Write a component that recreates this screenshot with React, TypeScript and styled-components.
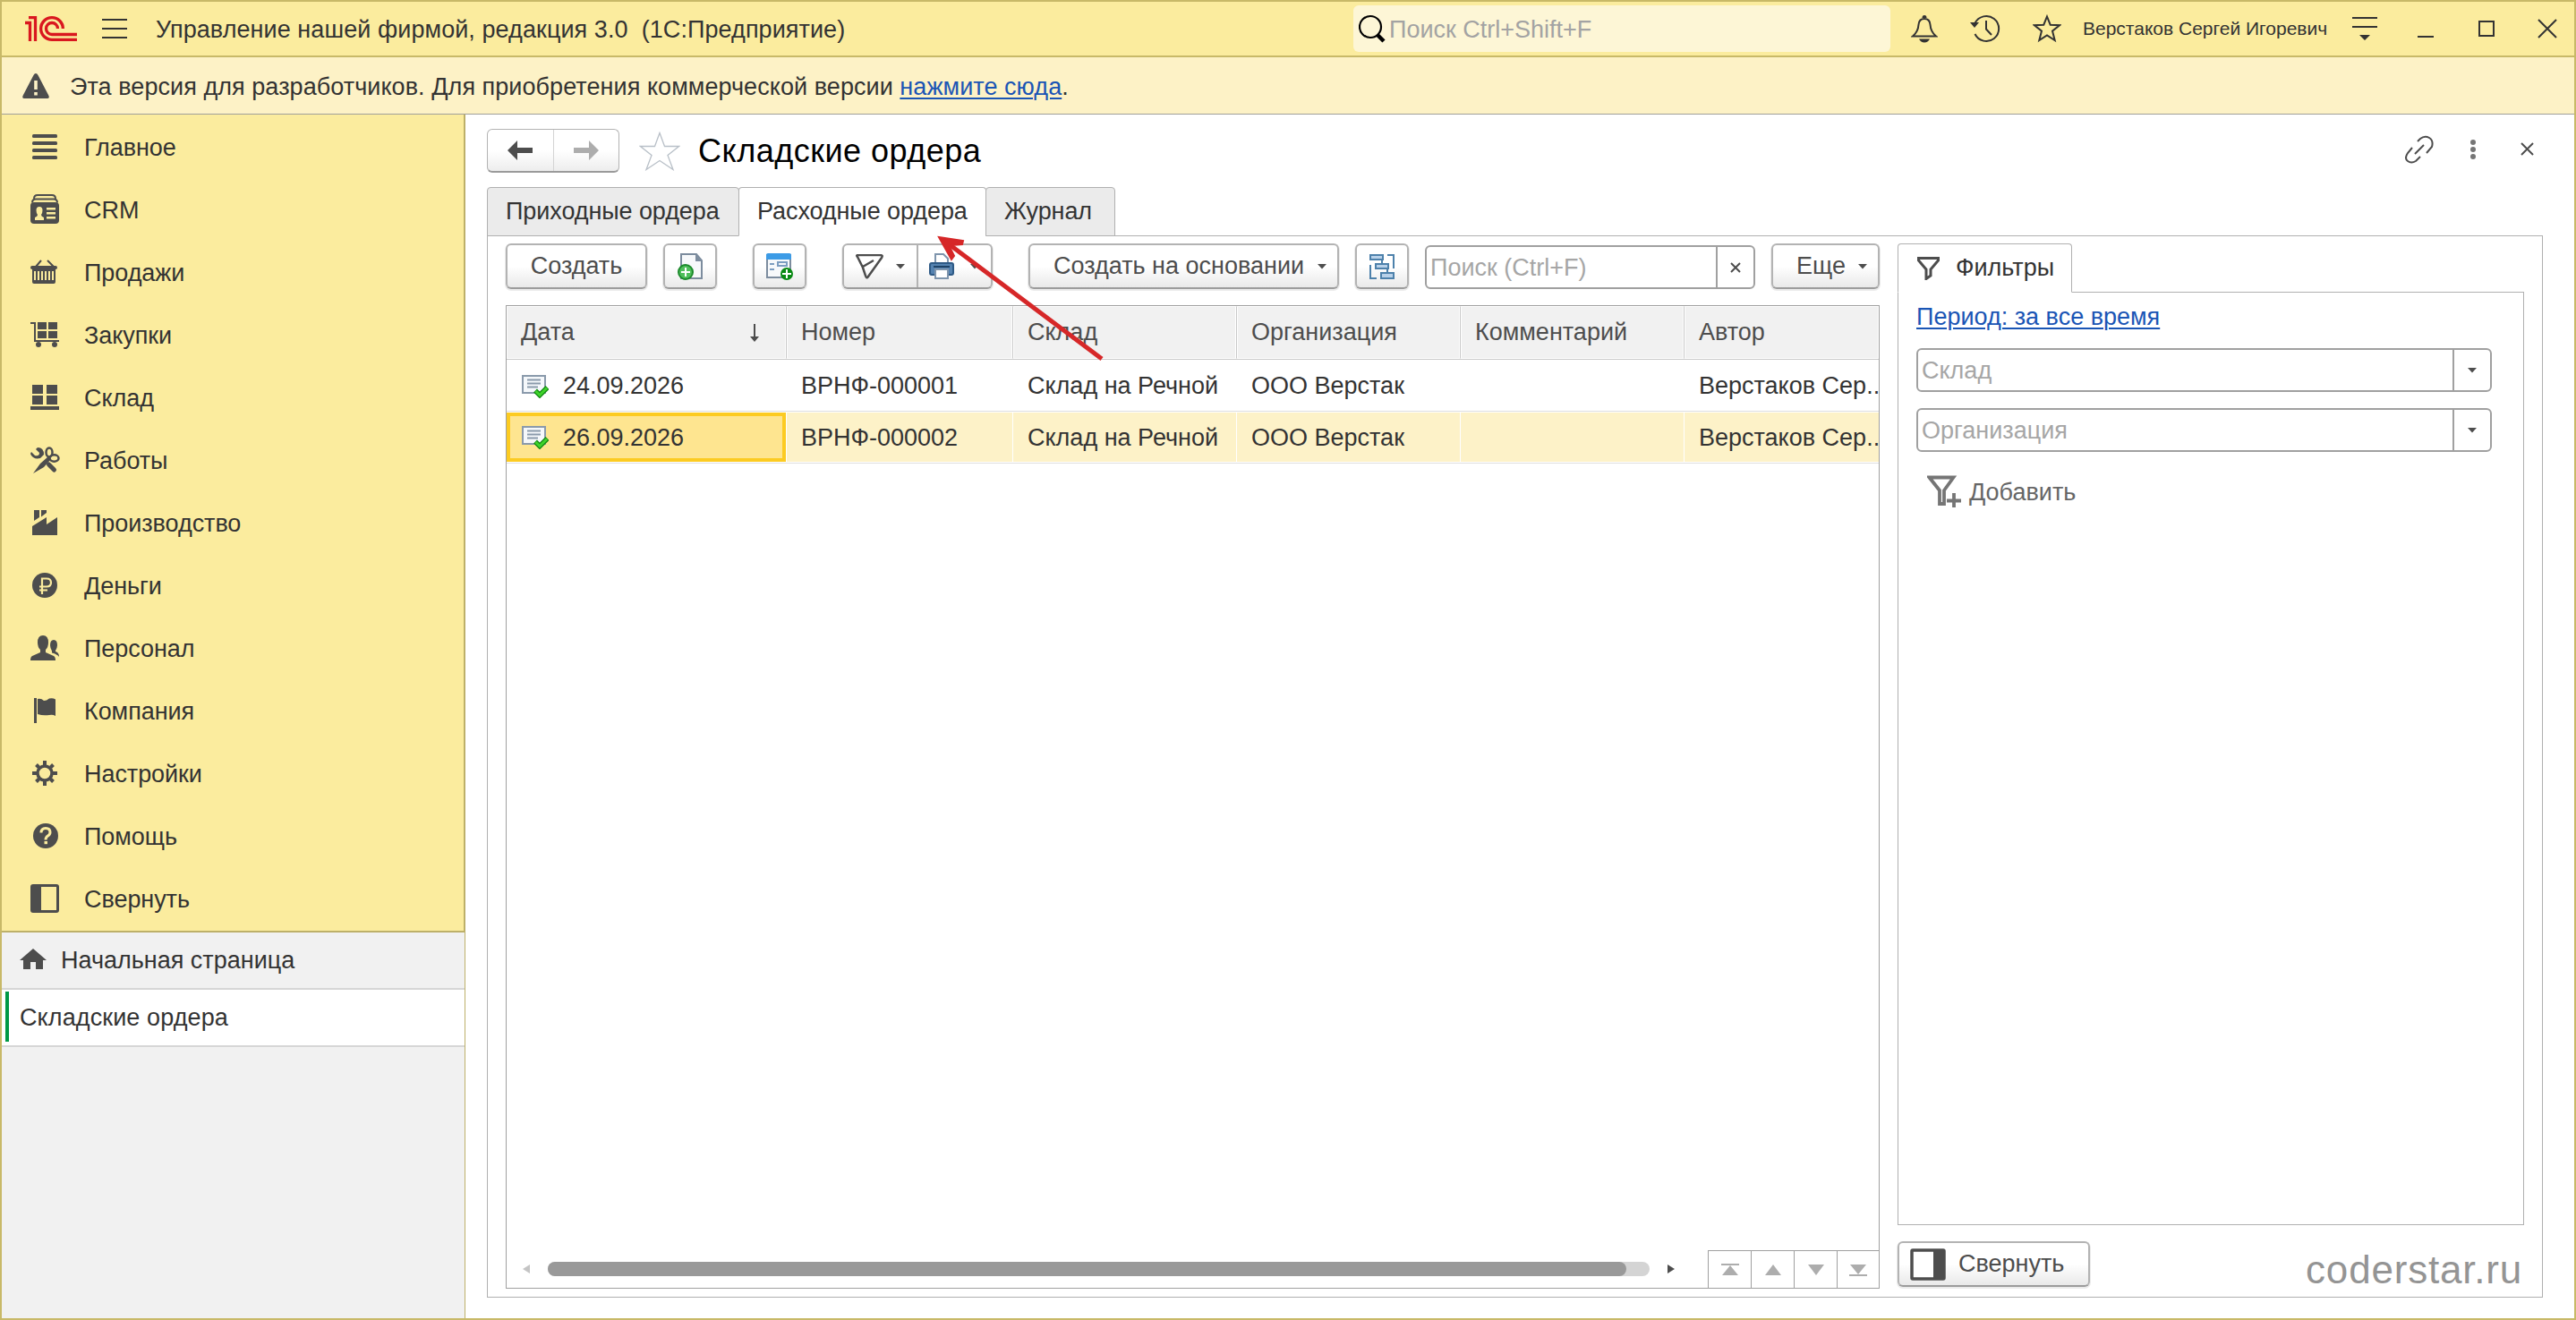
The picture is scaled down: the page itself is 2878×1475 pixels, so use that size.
import React from 'react'
import styled, { createGlobalStyle, css } from 'styled-components'

const GlobalStyle = createGlobalStyle`
  * {
    box-sizing: border-box;
  }

  body {
    margin: 0;
    font-family: 'Liberation Sans', Arial, sans-serif;
    font-size: 27px;
    color: #333333;
    background-color: #ffffff;
  }

  svg {
    display: block;
    flex-shrink: 0;
  }
`

const Window = styled.div`
  position: relative;
  display: flex;
  flex-direction: column;
  width: 2878px;
  height: 1475px;
  border: 2px solid #c8b968;
  overflow: hidden;
  white-space: nowrap;
`

const TitleBar = styled.div`
  display: flex;
  align-items: center;
  height: 62px;
  padding-left: 26px;
  background-color: #fbec9e;
  border-bottom: 2px solid #c8b968;
`

const AppTitle = styled.div`
  width: 1370px;
  padding: 2px 0 0 32px;
  letter-spacing: 0.07px;
  white-space: pre;
`

const GlobalSearch = styled.div`
  display: flex;
  align-items: center;
  gap: 4px;
  width: 600px;
  height: 52px;
  padding-left: 6px;
  border-radius: 6px;
  background-color: #fdf6d6;
  color: #a3a3a3;

  span {
    padding-top: 2px;
  }
`

const TitleActions = styled.div`
  display: flex;
  align-items: center;
  gap: 36px;
  margin-left: 23px;
`

const UserName = styled.div`
  width: 301px;
  margin-left: 24px;
  font-size: 21px;
`

const WindowActions = styled.div`
  display: flex;
  align-items: center;
  gap: 40px;
`

const Notice = styled.div`
  display: flex;
  align-items: center;
  height: 64px;
  padding-left: 22px;
  gap: 22px;
  background-color: #fdf2c6;
  border-bottom: 1px solid #a09f9a;
  letter-spacing: 0.06px;

  span {
    padding-top: 3px;
  }
`

const Link = styled.a`
  color: #1a55b5;
  text-decoration: underline;
  text-decoration-thickness: 2px;
  text-underline-offset: 3px;
`

const Body = styled.div`
  display: flex;
  flex: 1;
  min-height: 0;
`

const Sidebar = styled.div`
  display: flex;
  flex-direction: column;
  width: 518px;
  background-color: #f1f1f1;
  border-right: 1px solid #bdb069;
`

const Menu = styled.div`
  height: 914px;
  padding-top: 1px;
  background-color: #fbec9e;
  border-bottom: 2px solid #bdb069;
  border-right: 1px solid #bdb069;
`

const MenuItem = styled.div`
  display: flex;
  align-items: center;
  height: 70px;
  padding-left: 30px;
  gap: 26px;
  letter-spacing: -0.06px;

  span {
    padding-top: 2px;
  }
`

const OpenPage = styled.div<{ $active?: boolean }>`
  display: flex;
  align-items: center;
  height: 64px;
  padding-left: 18px;
  gap: 16px;
  border-bottom: 2px solid #d6d6d6;

  ${p =>
    p.$active &&
    css`
      padding-left: 4px;
      gap: 12px;
      background-color: #ffffff;
      letter-spacing: 0.1px;
    `}
`

const ActiveMark = styled.div`
  width: 4px;
  height: 56px;
  margin-top: -2px;
  background-color: #009846;
`

const Page = styled.div`
  display: flex;
  flex-direction: column;
  flex: 1;
  min-width: 0;
  padding: 16px 35px 23px 24px;
`

const PageHeader = styled.div`
  display: flex;
  align-items: center;
  height: 49px;
  margin-bottom: 16px;
`

const History = styled.div`
  display: flex;
  width: 148px;
  height: 49px;
  border: 1px solid #b3b3b3;
  border-bottom: 2px solid #9a9a9a;
  border-radius: 6px;
  background: linear-gradient(#ffffff 50%, #ededed);
`

const HistoryButton = styled.div`
  display: flex;
  align-items: center;
  justify-content: center;
  flex: 1;

  & + & {
    border-left: 1px solid #d4d4d4;
  }
`

const PageTitle = styled.h1`
  flex: 1;
  margin: 0;
  padding: 1px 0 0 20px;
  font-size: 36px;
  font-weight: normal;
  letter-spacing: 0.5px;
  color: #000000;
`

const PageActions = styled.div`
  display: flex;
  align-items: center;
  padding: 0 10px 4px 0;
`

const Tabs = styled.div`
  display: flex;
  height: 55px;
  margin-bottom: -1px;
`

const Tab = styled.div<{ $width: number; $active?: boolean }>`
  position: relative;
  display: flex;
  align-items: center;
  width: ${p => p.$width}px;
  padding: 0 0 0 20px;
  border: 1px solid #b0b0b0;
  border-radius: 4px 4px 0 0;
  background-color: ${p => (p.$active ? '#ffffff' : '#ebebeb')};
  border-bottom-color: ${p => (p.$active ? '#ffffff' : '#b0b0b0')};
  letter-spacing: -0.08px;

  & + & {
    margin-left: -1px;
  }
`

const Pane = styled.div`
  display: flex;
  flex: 1;
  min-height: 0;
  gap: 20px;
  padding: 8px 20px 9px 20px;
  border: 1px solid #b0b0b0;
`

const ListColumn = styled.div`
  display: flex;
  flex-direction: column;
  width: 1535px;
`

const Toolbar = styled.div`
  display: flex;
  align-items: flex-start;
  gap: 18px;
  height: 52px;
  margin-bottom: 17px;
`

const raised = css`
  height: 51px;
  border: 2px solid #b3b3b3;
  border-bottom-color: #9c9c9c;
  border-radius: 6px;
  background: linear-gradient(#ffffff 50%, #e9e9e9);
  box-shadow: 0 1px 0 1px rgba(0, 0, 0, 0.08);
  color: #4d4d4d;
`

const Button = styled.div<{ $width: number; $space?: number }>`
  ${raised}
  display: flex;
  align-items: center;
  justify-content: center;
  flex-shrink: 0;
  width: ${p => p.$width}px;
  margin-left: ${p => p.$space || 0}px;
`

const MenuButton = styled(Button)`
  justify-content: space-between;
  padding: 0 12px 0 26px;
`

const ButtonGroup = styled.div`
  ${raised}
  display: flex;
  width: 168px;
  margin: 0 22px;
`

const GroupButton = styled.div`
  display: flex;
  align-items: center;
  justify-content: space-between;
  flex: 1;
  padding: 0 13px 0 12px;

  & + & {
    border-left: 2px solid #b3b3b3;
  }
`

const Field = styled.div<{ $width: number }>`
  display: flex;
  width: ${p => p.$width}px;
  height: 49px;
  flex-shrink: 0;
  border: 2px solid #a0a0a0;
  border-radius: 6px;
  color: #a6a6a6;
`

const ToolbarSearch = styled(Field)`
  margin-top: 2px;
`

const FieldText = styled.div`
  flex: 1;
  padding: 8px 0 0 4px;
`

const FieldButton = styled.div`
  display: flex;
  align-items: center;
  justify-content: center;
  width: 42px;
  border-left: 2px solid #a0a0a0;
`

const Table = styled.div`
  display: flex;
  flex-direction: column;
  flex: 1;
  border: 1px solid #a0a0a0;
  overflow: hidden;
`

const Row = styled.div<{ $selected?: boolean }>`
  display: grid;
  grid-template-columns: 312px 253px 250px 250px 250px 218px;
  height: 58px;
  padding-top: 1px;
  border-bottom: 1px solid #dedede;

  ${p =>
    p.$selected &&
    css`
      div {
        background-color: #fdf2c8;
      }

      div + div {
        border-left-color: #ffffff;
      }
    `}
`

const HeaderRow = styled(Row)`
  height: 60px;
  padding: 0;
  color: #4d4d4d;
  border-bottom-color: #c8c8c8;
`

const HeaderCell = styled.div`
  display: flex;
  align-items: center;
  justify-content: space-between;
  padding: 0 28px 0 15px;
  background-color: #f1f1f1;
  border: 1px solid #ffffff;

  & + & {
    border-left: 1px solid #c8c8c8;
    padding-left: 16px;
    box-shadow: inset 1px 0 0 #ffffff;
  }
`

const Cell = styled.div<{ $current?: boolean }>`
  display: flex;
  align-items: center;
  gap: 16px;
  height: 55px;
  padding: 2px 0 0 16px;
  border-left: 1px solid transparent;
  overflow: hidden;

  ${p =>
    p.$current &&
    css`
      && {
        padding: 1px 0 0 13px;
        background-color: #fee590;
        border: 4px solid #fccb22;
      }
    `}
`

const TableFooter = styled.div`
  display: flex;
  align-items: flex-end;
  margin-top: auto;
  height: 42px;
`

const ScrollArea = styled.div`
  display: flex;
  align-items: center;
  flex: 1;
  height: 42px;
  padding: 0 37px 0 18px;
`

const ScrollTrack = styled.div`
  flex: 1;
  height: 16px;
  margin: 0 20px;
  border-radius: 8px;
  background-color: #d4d4d4;
`

const ScrollThumb = styled.div`
  width: 1205px;
  height: 16px;
  border-radius: 8px;
  background-color: #999999;
`

const NavButton = styled.div`
  display: flex;
  align-items: center;
  justify-content: center;
  width: 48px;
  height: 42px;
  border: 1px solid #a0a0a0;
  border-width: 1px 0 0 1px;

  &:last-child {
    width: 47px;
  }
`

const FilterColumn = styled.div`
  display: flex;
  flex-direction: column;
  flex: 1;
`

const FilterTab = styled.div`
  position: relative;
  display: flex;
  align-items: center;
  width: 195px;
  height: 55px;
  margin-bottom: -1px;
  padding: 0 0 0 21px;
  gap: 18px;
  border: 1px solid #b0b0b0;
  border-bottom-color: #ffffff;
  border-radius: 4px 4px 0 0;
  background-color: #ffffff;
`

const FilterPanel = styled.div`
  display: flex;
  flex-direction: column;
  align-items: flex-start;
  flex: 1;
  gap: 18px;
  padding: 12px 0 0 20px;
  margin-bottom: 18px;
  border: 1px solid #b0b0b0;
`

const PeriodLink = styled(Link)`
  height: 32px;
`

const AddFilter = styled.div`
  display: flex;
  align-items: center;
  padding-left: 12px;
  margin-top: 8px;
  gap: 9px;
  color: #666666;
`

const CollapseButton = styled(Button)`
  justify-content: flex-start;
  margin-bottom: 2px;
  padding-left: 12px;
  gap: 14px;
`

const Watermark = styled.div`
  position: absolute;
  right: 58px;
  bottom: 29px;
  font-size: 44px;
  line-height: 50px;
  letter-spacing: 0.8px;
  color: #949494;
`

const Pointer = styled.svg`
  position: absolute;
  left: 1039px;
  top: 252px;
`

const dark = '#4d4d4d'
const ink = '#333333'

const Caret = () => (
  <svg width="10" height="6" viewBox="0 0 10 6">
    <path d="M0 0h10l-5 5.5z" fill={dark} />
  </svg>
)

const Cross = ({ size }: { size: number }) => (
  <svg width={size} height={size} viewBox={`0 0 ${size} ${size}`}>
    <path d={`M1 1L${size - 1} ${size - 1}M${size - 1} 1L1 ${size - 1}`} stroke={dark} strokeWidth={2} />
  </svg>
)

const Logo = () => (
  <svg width="58" height="28" viewBox="0 0 58 28" fill="none" stroke="#d9171f" strokeWidth="3.300">
    <path d="M0 7.500H5.500V28M4 1.650h7.500V28" />
    <path d="M42.350 14A12.350 12.350 0 1 0 30 26.350H58" />
    <path d="M36.500 14A6.500 6.500 0 1 0 30 20.500H58" />
  </svg>
)

const menuItems = [
  {
    title: 'Главное',
    icon: (
      <>
        <rect x="4" y="4" width="28" height="4" rx="1.500" />
        <rect x="4" y="12" width="28" height="4" rx="1.500" />
        <rect x="4" y="20" width="28" height="4" rx="1.500" />
        <rect x="4" y="28" width="28" height="4" rx="1.500" />
      </>
    )
  },
  {
    title: 'CRM',
    icon: (
      <>
        <path d="M6 6q0-4 4-4h16q4 0 4 4M4 10.500q0-4 4-4h20q4 0 4 4" fill="none" stroke={dark} strokeWidth="2" />
        <rect x="2" y="10" width="32" height="24" rx="4" />
        <path
          d="M7 30v-3q3-1 3-3-1.500-2-1.500-5 0-4 3.500-4t3.500 4q0 3-1.500 5 0 2 3 3v3zM20 16h10v2.500H20zM20 21h10v2.500H20zM20 26h10v2.500H20z"
          fill="#fbec9e"
        />
      </>
    )
  },
  {
    title: 'Продажи',
    icon: (
      <>
        <path d="M8 12l6-7M28 12l-7-7" stroke={dark} strokeWidth="2" />
        <rect x="2" y="11" width="30" height="4" rx="2" />
        <path d="M4 14h26v15q0 2-2 2H6q-2 0-2-2z" />
        <path d="M6 17h2v10H6zM10 17h2v10h-2zM14 17h2v10h-2zM18 17h2v10h-2zM22 17h2v10h-2zM26 17h2v10h-2z" fill="#fbec9e" />
      </>
    )
  },
  {
    title: 'Закупки',
    icon: (
      <>
        <path d="M2 4h6v20h26v2H6V6H2zM10 4h10v8H10zM22 4h10v8H22zM10 14h10v8H10zM22 14h10v8H22z" />
        <circle cx="11" cy="29" r="3" />
        <circle cx="29" cy="29" r="3" />
      </>
    )
  },
  { title: 'Склад', icon: <path d="M4 4h12v10H4zM20 4h12v10H20zM4 16h12v10H4zM20 16h12v10H20zM2 28h32v4H2z" /> },
  {
    title: 'Работы',
    icon: (
      <>
        <path d="M5 33l8-11 9-8 3 3-8 9z" />
        <path d="M10 4q7 0 7 8l-4 4Q5 18 2 11l1-2 4 4q5 1 5-3L8 6z" />
        <path d="M22.500 23l6 6" stroke={dark} strokeWidth="5" strokeLinecap="round" />
        <ellipse cx="23" cy="9.500" rx="3.500" ry="5" fill="none" stroke={dark} strokeWidth="2.500" />
        <ellipse cx="28.500" cy="16" rx="5" ry="3.700" fill="none" stroke={dark} strokeWidth="2.500" />
      </>
    )
  },
  { title: 'Производство', icon: <path d="M6 4h6v8l-6 4zM14 4h6v3l-6 4.500zM4 22l16-10v8l12-8v20H4z" /> },
  {
    title: 'Деньги',
    icon: (
      <>
        <circle cx="18" cy="18" r="14" />
        <path d="M15 28V10.500h5q5 0 5 4.500t-5 4.500h-8M12 23.500h9" fill="none" stroke="#fbec9e" strokeWidth="2.200" />
      </>
    )
  },
  {
    title: 'Персонал',
    icon: (
      <>
        <path d="M16 4q6 0 6 8 0 5-3 8v3l9 4q2 1 2 5H2q0-4 2-5l9-4v-3q-3-3-3-8 0-8 6-8z" />
        <path d="M28 9q4 0 4 6 0 3-2 6v1q4 1 4 6-2-3-8-4.500v-2Q24 18 24 15q0-6 4-6z" />
      </>
    )
  },
  {
    title: 'Компания',
    icon: <path d="M6 4h3v28H6zM10 5q4-1 7 2 3 0 6-2.500 4-1 7 1V24q-3-2-7-1-7 1-13-1z" />
  },
  {
    title: 'Настройки',
    icon: (
      <>
        <circle cx="18" cy="18" r="8" fill="none" stroke={dark} strokeWidth="3.500" />
        <path
          d="M18 4v5M18 27v5M4 18h5M27 18h5M8.500 8.500l3 3M24.500 24.500l3 3M27.500 8.500l-3 3M11.500 24.500l-3 3"
          stroke={dark}
          strokeWidth="4"
        />
      </>
    )
  },
  {
    title: 'Помощь',
    icon: (
      <>
        <circle cx="19" cy="18" r="14" />
        <path d="M14 14.500q0-5 5-5t5 4.500q0 2.500-2.500 4T19 22.500" fill="none" stroke="#fbec9e" strokeWidth="3" />
        <path d="M17.500 24h3.500v3.200h-3.500z" fill="#fbec9e" />
      </>
    )
  },
  {
    title: 'Свернуть',
    icon: (
      <>
        <rect x="3.500" y="3.500" width="29" height="29" rx="1.500" fill="none" stroke={dark} strokeWidth="3" />
        <path d="M3 3h11v30H3z" />
      </>
    )
  }
]

const rows = [
  { date: '24.09.2026', number: 'ВРНФ-000001' },
  { date: '26.09.2026', number: 'ВРНФ-000002', selected: true }
]

const DocumentIcon = () => (
  <svg width="30" height="26" viewBox="0 0 30 26" fill="none">
    <path d="M1 1h25v19H1z" fill="#f5f8fb" stroke="#8a9aab" strokeWidth="2" />
    <path d="M6 5.500h15M6 9.500h15M6 13.500h12" stroke="#8a9aab" strokeWidth="2" />
    <path d="M15 17.500l5 5 8.500-8.500" stroke="#128a12" strokeWidth="5.500" />
    <path d="M15.500 18l4.500 4.500 8-8" stroke="#3fd42b" strokeWidth="3" />
  </svg>
)

export default function App() {
  return (
    <Window>
      <GlobalStyle />
      <TitleBar>
        <Logo />
        <svg width="28" height="22" viewBox="0 0 28 22" style={{ marginLeft: 28 }}>
          <path d="M0 0h28v2H0zM0 10h28v2H0zM0 20h28v2H0z" fill={ink} />
        </svg>
        <AppTitle>Управление нашей фирмой, редакция 3.0  (1С:Предприятие)</AppTitle>
        <GlobalSearch>
          <svg width="30" height="32" viewBox="0 0 30 32" fill="none" stroke="#000000">
            <circle cx="13" cy="14" r="12" strokeWidth="2.200" />
            <path d="M21 23l7 7" strokeWidth="4.500" />
          </svg>
          <span>Поиск Ctrl+Shift+F</span>
        </GlobalSearch>
        <TitleActions>
          <svg width="30" height="32" viewBox="0 0 30 32" fill="none" stroke={ink} strokeWidth="2">
            <path d="M2 24.500q6-5 6.500-13Q9 5 15 5t6.500 6.500Q22 19.500 28 24.500z" />
            <path d="M12.500 4q0-3 2.500-3t2.500 3z" fill={ink} stroke="none" />
            <path d="M9 27.500h12q-2 4-6 4t-6-4z" fill={ink} stroke="none" />
          </svg>
          <svg width="34" height="32" viewBox="0 0 34 32" fill="none" stroke={ink} strokeWidth="2">
            <path d="M5.500 10A14 14 0 1 1 5.500 22" />
            <path d="M18 7v9.500l6 6.500" />
            <path d="M0 9h10l-5 6z" fill={ink} stroke="none" />
          </svg>
          <svg width="32" height="32" viewBox="0 0 32 32" fill="none" stroke={ink} strokeWidth="2">
            <path d="M16 2.500l3.700 9.200 10.300.5-8 6.400 2.700 10.400L16 23.500 7.300 29 10 18.600 2 12.200l10.300-.5z" />
          </svg>
        </TitleActions>
        <UserName>Верстаков Сергей Игоревич</UserName>
        <WindowActions>
          <svg width="28" height="26" viewBox="0 0 28 26" fill={ink}>
            <path d="M0 0h28v2H0zM0 10h28v2H0zM8 20h12l-6 6z" />
          </svg>
          <svg width="28" height="20" viewBox="0 0 28 20">
            <path d="M5 18h18v2H5z" fill={ink} />
          </svg>
          <svg width="28" height="20" viewBox="0 0 28 20">
            <path d="M6 2h16v16H6z" fill="none" stroke={ink} strokeWidth="2" />
          </svg>
          <svg width="28" height="22" viewBox="0 0 28 22">
            <path d="M4 1l20 20M24 1L4 21" stroke={ink} strokeWidth="2" />
          </svg>
        </WindowActions>
      </TitleBar>

      <Notice>
        <svg width="32" height="30" viewBox="0 0 32 30">
          <path d="M16 1q1.500 0 2.500 2l12 23q1 3-1.500 3H3q-2.500 0-1.500-3l12-23q1-2 2.500-2z" fill={dark} />
          <path d="M14.200 9h3.600v10h-3.600zM14.200 22h3.600v3.500h-3.600z" fill="#fdf2c6" />
        </svg>
        <span>
          Эта версия для разработчиков. Для приобретения коммерческой версии <Link>нажмите сюда</Link>.
        </span>
      </Notice>

      <Body>
        <Sidebar>
          <Menu>
            {menuItems.map(item => (
              <MenuItem key={item.title}>
                <svg width="36" height="36" viewBox="0 0 36 36" fill={dark}>
                  {item.icon}
                </svg>
                <span>{item.title}</span>
              </MenuItem>
            ))}
          </Menu>
          <OpenPage>
            <svg width="32" height="26" viewBox="0 0 32 26" style={{ marginTop: -2 }}>
              <path d="M17 1l15 13h-4v10h-8v-8h-6v8H6V14H2z" fill={dark} />
            </svg>
            Начальная страница
          </OpenPage>
          <OpenPage $active>
            <ActiveMark />
            Складские ордера
          </OpenPage>
        </Sidebar>

        <Page>
          <PageHeader>
            <History>
              <HistoryButton>
                <svg width="28" height="22" viewBox="0 0 28 22">
                  <path d="M0 11L11 0v8h17v6H11v8z" fill={dark} />
                </svg>
              </HistoryButton>
              <HistoryButton>
                <svg width="28" height="22" viewBox="0 0 28 22">
                  <path d="M28 11L17 0v8H0v6h17v8z" fill="#adadad" />
                </svg>
              </HistoryButton>
            </History>
            <svg width="46" height="44" viewBox="0 0 46 44" style={{ marginLeft: 22 }}>
              <path
                d="M23 1.500l5.500 15h16L32 26.500 38 42.500 23 32.500 8 42.500l6-16L1.500 16.500h16z"
                fill="none"
                stroke="#b9c0c8"
                strokeWidth="1.300"
              />
            </svg>
            <PageTitle>Складские ордера</PageTitle>
            <PageActions>
              <svg width="32" height="32" viewBox="0 0 32 32" fill="none" stroke={dark} strokeWidth="2">
                <path d="M14 7l3-3q5-4 10-1t3 10l-6 7M8 14l-5 6q-4 6 0 9t9 0l5-5M11 21L21 11" />
              </svg>
              <svg width="6" height="22" viewBox="0 0 6 22" fill="#757575" style={{ margin: '0 50px 0 41px' }}>
                <circle cx="3" cy="3" r="3" />
                <circle cx="3" cy="11" r="3" />
                <circle cx="3" cy="19" r="3" />
              </svg>
              <Cross size={15} />
            </PageActions>
          </PageHeader>

          <Tabs>
            <Tab $width={282}>Приходные ордера</Tab>
            <Tab $width={277} $active>
              Расходные ордера
            </Tab>
            <Tab $width={145}>Журнал</Tab>
          </Tabs>

          <Pane>
            <ListColumn>
              <Toolbar>
                <Button $width={158}>Создать</Button>
                <Button $width={60}>
                  <svg width="30" height="30" viewBox="0 0 30 30" fill="none">
                    <path d="M5 1h17l6 7v20H5z" fill="#f7f9fb" stroke="#7c8c9e" strokeWidth="2" />
                    <path d="M21 1v8h7z" fill="#7c8c9e" />
                    <circle cx="10" cy="21" r="8" fill="#4fbf5c" stroke="#1c8a2c" strokeWidth="2" />
                    <path d="M10 16v10M5 21h10" stroke="#ffffff" strokeWidth="2" />
                  </svg>
                </Button>
                <Button $width={60} $space={22}>
                  <svg width="32" height="30" viewBox="0 0 32 30" fill="none">
                    <path d="M2 2h26v25H2z" fill="#f7f9fb" stroke="#7c8c9e" strokeWidth="2" />
                    <path d="M1 7V2q0-2 2-2h24q2 0 2 2v5z" fill="#3c9be6" />
                    <path d="M5 12h5M5 18h5" stroke="#7c9dc0" strokeWidth="2" />
                    <path d="M14 10h10v4H14z" stroke="#7c9dc0" strokeWidth="2" />
                    <circle cx="24" cy="23" r="7" fill="#0a8a14" />
                    <path d="M24 18v10M19 23h10" stroke="#ffffff" strokeWidth="2" />
                  </svg>
                </Button>
                <ButtonGroup>
                  <GroupButton>
                    <svg width="32" height="28" viewBox="0 0 32 28" fill="none" stroke={dark} strokeWidth="2.500">
                      <path d="M3 3q-2-2 1-2h24q4 0 2 3L15 25q-2 3-3-1l-3-9zM9 14l12-7" />
                    </svg>
                    <Caret />
                  </GroupButton>
                  <GroupButton>
                    <svg width="28" height="30" viewBox="0 0 28 30" fill="none">
                      <path d="M7 11V1h9l5 5v5" fill="#ffffff" stroke="#7f95ad" strokeWidth="2" />
                      <rect x="1" y="11" width="26" height="13" rx="2" fill="#5482b0" stroke="#2e5a86" strokeWidth="2" />
                      <path d="M5 15h18" stroke="#1e4266" strokeWidth="2" />
                      <path d="M7 18h14v10H7z" fill="#ffffff" stroke="#7f95ad" strokeWidth="2" />
                    </svg>
                    <Caret />
                  </GroupButton>
                </ButtonGroup>
                <MenuButton $width={347}>
                  Создать на основании <Caret />
                </MenuButton>
                <Button $width={60}>
                  <svg width="28" height="28" viewBox="0 0 28 28" fill="#b9d2ea" stroke="#4d81ab" strokeWidth="2">
                    <path d="M1 1h14v5H1zM7 11h14v5H7zM13 21h14v6H13z" />
                    <path d="M20 1h7v15M1 12v15h7M14 6v5M20 16v5" fill="none" />
                  </svg>
                </Button>
                <ToolbarSearch $width={369}>
                  <FieldText>Поиск (Ctrl+F)</FieldText>
                  <FieldButton>
                    <Cross size={12} />
                  </FieldButton>
                </ToolbarSearch>
                <MenuButton $width={121}>
                  Еще <Caret />
                </MenuButton>
              </Toolbar>

              <Table>
                <HeaderRow>
                  <HeaderCell>
                    Дата
                    <svg width="12" height="20" viewBox="0 0 12 20">
                      <path d="M5 0h2v14h4l-5 6-5-6h4z" fill={dark} />
                    </svg>
                  </HeaderCell>
                  <HeaderCell>Номер</HeaderCell>
                  <HeaderCell>Склад</HeaderCell>
                  <HeaderCell>Организация</HeaderCell>
                  <HeaderCell>Комментарий</HeaderCell>
                  <HeaderCell>Автор</HeaderCell>
                </HeaderRow>
                {rows.map(row => (
                  <Row key={row.number} $selected={row.selected}>
                    <Cell $current={row.selected}>
                      <DocumentIcon />
                      {row.date}
                    </Cell>
                    <Cell>{row.number}</Cell>
                    <Cell>Склад на Речной</Cell>
                    <Cell>ООО Верстак</Cell>
                    <Cell />
                    <Cell>Верстаков Сер..</Cell>
                  </Row>
                ))}
                <TableFooter>
                  <ScrollArea>
                    <svg width="8" height="10" viewBox="0 0 8 10">
                      <path d="M8 0v10L0 5z" fill="#c4c4c4" />
                    </svg>
                    <ScrollTrack>
                      <ScrollThumb />
                    </ScrollTrack>
                    <svg width="8" height="10" viewBox="0 0 8 10">
                      <path d="M0 0v10l8-5z" fill={dark} />
                    </svg>
                  </ScrollArea>
                  {['M0 0h20v2H0zM10 2l9 11H1z', 'M10 1l9 12H1z', 'M1 1h18l-9 12z', 'M0 12h20v2H0zM1 1h18l-9 11z'].map(d => (
                    <NavButton key={d}>
                      <svg width="20" height="14" viewBox="0 0 20 14">
                        <path d={d} fill="#adadad" />
                      </svg>
                    </NavButton>
                  ))}
                </TableFooter>
              </Table>
            </ListColumn>

            <FilterColumn>
              <FilterTab>
                <svg width="25" height="26" viewBox="0 0 25 26">
                  <path d="M1.500 1.500h22v2.500L15 14v7l-5 3.500V14L1.500 4z" fill="none" stroke={dark} strokeWidth="3" />
                </svg>
                Фильтры
              </FilterTab>
              <FilterPanel>
                <PeriodLink>Период: за все время</PeriodLink>
                {['Склад', 'Организация'].map(name => (
                  <Field key={name} $width={643}>
                    <FieldText>{name}</FieldText>
                    <FieldButton>
                      <Caret />
                    </FieldButton>
                  </Field>
                ))}
                <AddFilter>
                  <svg width="38" height="38" viewBox="0 0 38 38" fill="none" stroke="#757575">
                    <path d="M2.500 2.500h27L19 17v15h-5V17z" strokeWidth="3.800" />
                    <path d="M30 20v16M22 28.500h16" strokeWidth="3.800" />
                  </svg>
                  Добавить
                </AddFilter>
              </FilterPanel>
              <CollapseButton $width={215}>
                <svg width="40" height="36" viewBox="0 0 40 36">
                  <rect x="2" y="2" width="36" height="32" rx="1" fill="#ffffff" stroke={dark} strokeWidth="3.500" />
                  <path d="M26 2h13v32H26z" fill={dark} />
                </svg>
                Свернуть
              </CollapseButton>
            </FilterColumn>
          </Pane>
        </Page>
      </Body>

      <Watermark>coderstar.ru</Watermark>
      <Pointer width="200" height="160" viewBox="0 0 200 160">
        <path d="M14 15L190 147" stroke="#d62728" strokeWidth="5" />
        <path d="M8 11l27 4-1 4-12 1-2 2 5 10-3 4z" fill="#d62728" stroke="#d62728" strokeWidth="2" />
      </Pointer>
    </Window>
  )
}
